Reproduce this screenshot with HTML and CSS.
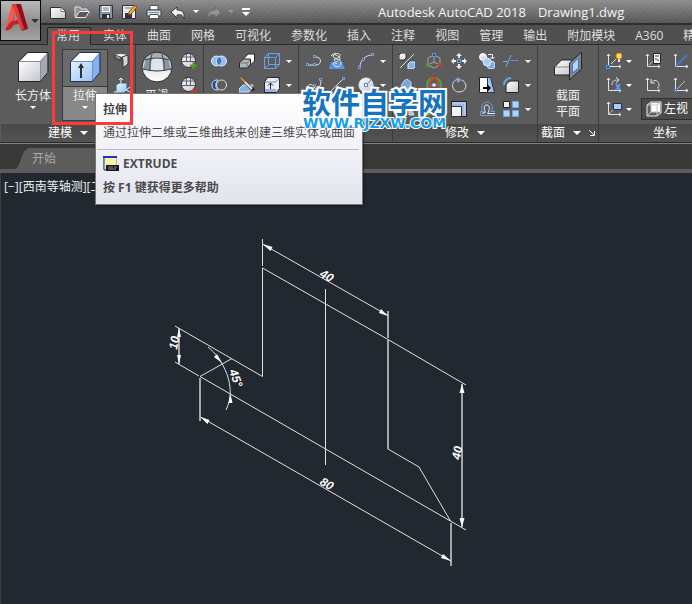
FILE: index.html
```html
<!DOCTYPE html>
<html lang="zh-CN">
<head>
<meta charset="utf-8">
<title>Autodesk AutoCAD 2018</title>
<link rel="stylesheet" href="styles.css">
</head>
<body>
<svg class="defs" aria-hidden="true">
  <defs>
    <linearGradient id="white" x1="0" y1="0" x2="1" y2="1"><stop offset="0" stop-color="#fff"/><stop offset="1" stop-color="#c3c6cf"/></linearGradient>
    <linearGradient id="blue" x1="0" y1="0" x2="1" y2="1"><stop offset="0" stop-color="#e3f1ff"/><stop offset="1" stop-color="#9cc4f3"/></linearGradient>
    <linearGradient id="ball" x1="0" y1="0" x2="0" y2="1"><stop offset="0" stop-color="#9aa1a8"/><stop offset=".6" stop-color="#e8eaee"/><stop offset="1" stop-color="#fff"/></linearGradient>
    <linearGradient id="red" x1="0" y1="0" x2="1" y2="1"><stop offset="0" stop-color="#ee4a4a"/><stop offset="1" stop-color="#a31620"/></linearGradient>
    <symbol id="globe" viewBox="0 0 32 32">
      <circle cx="16" cy="16" r="15" fill="url(#ball)" stroke="#25282b"/>
      <path d="M5 8q11-4 22 0l3 10q-14 4-28 0z" fill="#8d959c"/>
      <path d="M11 7q5-1 10 0l2 12q-7 1.200-14 0z" fill="#dfe4e9"/>
      <path d="M4 9q12-4 24 0M2 18q14 4 28 0M11 3Q8 11 9 20M21 3q3 8 2 17" fill="none" stroke="#3c4349"/>
    </symbol>
    <symbol id="miniglobe" viewBox="0 0 16 16">
      <circle cx="7.500" cy="7.500" r="7" fill="url(#white)" stroke="#2b2e31"/>
      <path d="M2 4h11M1 8.500h13M5.500 1v8M9.500 1v8" fill="none" stroke="#5a636b"/>
    </symbol>
    <symbol id="axes" viewBox="0 0 16 16">
      <path d="M2.500 1v12.500H15M1 3l1.500-2L4 3M13 12l2 1.500-2 1.500" fill="none" stroke="#e4e4e4"/>
    </symbol>
  </defs>
</svg>

<header class="top">
  <button class="logo" aria-label="应用程序菜单">
    <svg width="39" height="38" viewBox="0 0 39 38">
      <path d="M11 2h8l8 25-6 2-6-19-4 16-6 3z" fill="url(#red)"/>
      <path d="M11 2l4 7L9 27l-5 1z" fill="#f05a55"/>
      <path d="M4 28l5-8 13-4 2 4-11 3-5 5z" fill="#c12530"/>
      <path d="M15 2h5l7 25-4-1z" fill="#8f1019"/>
      <path d="M11 2l4 0 8 25-3 1z" fill="#dc3d3f"/>
      <path d="M30 17h8l-4 4z" fill="#2e333a"/>
    </svg>
  </button>
  <div class="titlebar">
    <nav class="quick" aria-label="快速访问工具栏">
      <button aria-label="新建"><svg width="16" height="16" viewBox="0 0 16 16"><path d="M.5 3.500h11l4 4v7H.5z" fill="url(#white)" stroke="#303030"/><path d="M11 3.500v4h4" fill="#fff" stroke="#777"/></svg></button>
      <button aria-label="打开"><svg width="16" height="16" viewBox="0 0 16 16"><path d="M1 13V3h5l1 2h6v3" fill="#8b949c" stroke="#dde1e4"/><path d="M1.500 13.500l4-6h10l-4 6z" fill="#525960" stroke="#e8ebee"/></svg></button>
      <button aria-label="保存"><svg width="16" height="16" viewBox="0 0 16 16"><path d="M1.500 1.500h13v13h-13z" fill="#8795a5" stroke="#2d3339"/><path d="M4 2h8v6H4z" fill="#f4f6f8"/><path d="M5 4h6M5 6h6" stroke="#777"/><path d="M4 10h8v5H4z" fill="#2b3540"/><path d="M9 11h2v3H9z" fill="#eee"/></svg></button>
      <button aria-label="另存为"><svg width="16" height="16" viewBox="0 0 16 16"><path d="M.5 1.500h13v13H.5z" fill="#e5e8ec" stroke="#2d3339"/><path d="M3 9h7v6H3z" fill="#2b3540"/><path d="M3 4h7" stroke="#777"/><path d="M6 11l1-3 6-7 2 2-6 7z" fill="#f2b53b" stroke="#7c4d12"/><path d="M13 1l2 2" stroke="#d44" stroke-width="2"/></svg></button>
      <button aria-label="打印"><svg width="16" height="16" viewBox="0 0 16 16"><path d="M4 1.500h8V6H4z" fill="#fff" stroke="#505050"/><path d="M1 6h14v6H1z" fill="#d9dde1" stroke="#393d40"/><path d="M4 10.500h8l1 4H3z" fill="#fff" stroke="#555"/><path d="M3 8.500h10" stroke="#7098bc"/></svg></button>
      <button aria-label="放弃"><svg width="16" height="16" viewBox="0 0 16 16"><path d="M1 8l6-5v3c5 0 8 2 7 9-1-4-3-5-7-4v3z" fill="#e8eef4" stroke="#33383d"/></svg></button>
      <button aria-label="放弃列表"><i class="caret"></i></button>
      <button aria-label="重做"><svg width="16" height="16" viewBox="0 0 16 16"><path d="M15 8L9 3v3C4 6 1 8 2 15c1-4 3-5 7-4v3z" fill="#929292" stroke="#6b6b6b"/></svg></button>
      <button aria-label="重做列表"><i class="caret dim"></i></button>
      <button aria-label="自定义"><svg width="10" height="10" viewBox="0 0 10 10"><path d="M1 2h8" stroke="#fff" stroke-width="2"/><path d="M1 5h8L5 9z" fill="#fff"/></svg></button>
    </nav>
    <h1 class="title"><span>Autodesk AutoCAD 2018</span><span>Drawing1.dwg</span></h1>
  </div>
  <nav class="tabs" aria-label="功能区选项卡">
    <a class="tab active" href="#home">常用</a>
    <a class="tab" href="#solid">实体</a>
    <a class="tab" href="#surface">曲面</a>
    <a class="tab" href="#mesh">网格</a>
    <a class="tab" href="#visual">可视化</a>
    <a class="tab" href="#param">参数化</a>
    <a class="tab" href="#insert">插入</a>
    <a class="tab" href="#annotate">注释</a>
    <a class="tab" href="#view">视图</a>
    <a class="tab" href="#manage">管理</a>
    <a class="tab" href="#output">输出</a>
    <a class="tab" href="#addins">附加模块</a>
    <a class="tab" href="#a360">A360</a>
    <a class="tab" href="#apps">精</a>
  </nav>
</header>

<main class="app">
<div class="ribbon">
  <section class="panel modeling">
    <div class="tools">
      <button class="big">
        <svg width="32" height="32" viewBox="0 0 32 32"><path d="M1.500 10.500l9-9H31v20l-8 9H1.500z" fill="#8c8e93" stroke="#202224"/><path d="M3 10l8-8h19l-7 8z" fill="#fff"/><path d="M2 11h21v19H2z" fill="url(#white)"/><path d="M24 11l6-8v18l-6 8z" fill="#a5a8b0"/></svg>
        <span>长方体</span><i class="caret"></i>
      </button>
      <button class="big pressed">
        <svg width="32" height="32" viewBox="0 0 32 32"><path d="M1.500 10.500l9-9H31v20l-8 9H1.500z" fill="#678fc7" stroke="#1c3557"/><path d="M3 10l8-8h19l-7 8z" fill="#fff"/><path d="M2 11h21v19H2z" fill="url(#blue)"/><path d="M24 11l6-8v18l-6 8z" fill="#84b2ee"/><path d="M12 27V14" stroke="#29313a" stroke-width="2"/><path d="M9 17l3-5 3 5z" fill="#29313a"/></svg>
        <span>拉伸</span><i class="caret"></i>
      </button>
      <div class="stack">
        <button aria-label="多段体"><svg width="16" height="16" viewBox="0 0 16 16"><path d="M1 1.500l6 2v4l-6-2z" fill="#85898e" stroke="#303236"/><path d="M1 1.500L7 1l7 1-6 2z" fill="#fff"/><path d="M8 4l6-2v9l-5 4V7z" fill="#d4d7db" stroke="#303236"/></svg></button>
        <button aria-label="按住并拖动"><svg width="16" height="16" viewBox="0 0 16 16"><path d="M2 8l3-2h8v7l-3 3H2z" fill="url(#blue)" stroke="#3d5a80"/><path d="M7 9V1M5 3l2-2 2 2M12 13l4-3M0 15h3M12 13l4 2" fill="none" stroke="#eee"/></svg></button>
      </div>
    </div>
    <h2>建模<i class="caret wide"></i></h2>
  </section>

  <section class="panel mesh">
    <div class="tools">
      <button class="big">
        <svg width="32" height="32"><use href="#globe"/></svg>
        <span>平滑</span>
      </button>
      <div class="stack">
        <button aria-label="提高平滑度"><svg width="16" height="16" viewBox="0 0 16 16"><use href="#miniglobe" width="16" height="16"/><path d="M12.500 9v7M9 12.500h7" stroke="#4ba51e" stroke-width="2"/></svg></button>
        <button aria-label="降低平滑度"><svg width="16" height="16" viewBox="0 0 16 16"><use href="#miniglobe" width="16" height="16"/><path d="M10 14h6" stroke="#e0360f" stroke-width="2"/></svg></button>
      </div>
    </div>
    <h2></h2>
  </section>

  <section class="panel solid">
    <div class="tools">
      <button aria-label="并集"><svg width="16" height="16" viewBox="0 0 16 16"><circle cx="5.500" cy="8" r="5" fill="#9fbce8" stroke="#e6effc"/><circle cx="10.500" cy="8" r="5" fill="#9fbce8" stroke="#e6effc"/><path d="M8 4c3 3 3 5 0 8-3-3-3-5 0-8z" fill="#3975cc"/></svg></button>
      <button aria-label="按住拖动"><svg width="16" height="16" viewBox="0 0 16 16"><path d="M5 5.500l4-4.500h6.500v7l-4 4H5z" fill="#fff" stroke="#26282a"/><path d="M.5 9.500l4-3.500h7v5l-3 4h-8z" fill="#b3b6b9" stroke="#26282a"/><path d="M1 10h7v5M8 10l3-3" fill="none" stroke="#777"/></svg></button>
      <button aria-label="提取边"><svg width="16" height="16" viewBox="0 0 16 16"><path d="M.5 4.500h11v11H.5zM4.500.5h11v11h-11zM.5 4.500l4-4M11.500 4.500l4-4M11.500 15.500l4-4M.5 15.500l4-4" fill="none" stroke="#6aa2e8"/></svg></button>
      <button aria-label="更多"><i class="caret"></i></button>
      <button aria-label="差集"><svg width="16" height="16" viewBox="0 0 16 16"><circle cx="10.500" cy="8" r="5" fill="none" stroke="#ddd"/><path d="M7 3C-1 2-1 14 7 13 4 10 4 6 7 3z" fill="#1d4a8e" stroke="#d7e5f9"/></svg></button>
      <button aria-label="剖切"><svg width="16" height="16" viewBox="0 0 16 16"><path d="M0 12l4-4h10l-4 7H0z" fill="#7fb1ed" stroke="#d9e9fb"/><path d="M2 1l11 11 2 1" stroke="#222" stroke-width="3"/><path d="M2 1l11 11" stroke="#f3e8d6" stroke-width="2"/><path d="M2 1l4 4" stroke="#c47b37" stroke-width="2"/></svg></button>
      <button aria-label="拉伸面"><svg width="16" height="16" viewBox="0 0 16 16"><path d="M.5 5l3-4.500h12v11l-3 4H.5z" fill="#e9edf3" stroke="#25282d"/><path d="M1 5h11l3-4" fill="none" stroke="#7b8ba0"/><path d="M1 12h11v3H1z" fill="#8fb6e8"/><path d="M6.500 12V6M4 8.500L6.500 6 9 8.500" fill="none" stroke="#222"/></svg></button>
      <button aria-label="更多"><i class="caret"></i></button>
    </div>
    <h2></h2>
  </section>

  <section class="panel draw">
    <div class="tools">
      <button aria-label="多段线"><svg width="16" height="16" viewBox="0 0 16 16"><path d="M1 12h9c6 0 6-8 0-8" fill="none" stroke="#ddd"/><path d="M.5 10.500h2v2h-2zM7.500 2.500h2v2h-2zM7.500 10.500h2v2h-2z" fill="#26466f" stroke="#78aaf0"/></svg></button>
      <button aria-label="螺旋"><svg width="16" height="16" viewBox="0 0 16 16"><path d="M2 9h11l3 7H0z" fill="#5b93e4"/><path d="M2 3c3-4 10-3 9 0s-7 3-7 0 7 0 7 3-6 3-6 1 7-1 7 3-5 5-7 2 1-3 3-1" fill="none" stroke="#eee"/></svg></button>
      <button class="end" aria-label="圆弧"><svg width="16" height="16" viewBox="0 0 16 16"><path d="M2 14C2 8 7 2 14 2" fill="none" stroke="#ddd"/><path d="M.5 13.500h2v2h-2zM4.500 5.500h2v2h-2zM13.500.5h2v2h-2z" fill="#26466f" stroke="#78aaf0"/></svg></button>
      <button aria-label="更多"><i class="caret"></i></button>
      <button aria-label="样条曲线"><svg width="16" height="16" viewBox="0 0 16 16"><path d="M1 13c1-8 5-6 7-3s7 3 7-8" fill="none" stroke="#ddd"/><path d="M7.500 7.500h2v2h-2zM13.500 1.500h2v2h-2z" fill="#26466f" stroke="#78aaf0"/></svg></button>
      <button aria-label="直线"><svg width="16" height="16" viewBox="0 0 16 16"><path d="M1 15L14 2" stroke="#ddd"/><path d="M13.500.5h2v2h-2z" fill="#26466f" stroke="#78aaf0"/></svg></button>
      <button class="end" aria-label="圆"><svg width="16" height="16" viewBox="0 0 16 16"><circle cx="8" cy="8" r="7" fill="url(#white)" stroke="#eee"/><path d="M8 8l5-5" stroke="#4b86dc"/><path d="M6.500 6.500h3v3h-3z" fill="#fff" stroke="#4b86dc"/></svg></button>
      <button aria-label="更多"><i class="caret"></i></button>
    </div>
    <h2></h2>
  </section>

  <section class="panel modify">
    <div class="tools">
      <button aria-label="三维对齐"><svg width="16" height="16" viewBox="0 0 16 16"><path d="M1 15L15 1" stroke="#ddd"/><path d="M0 2l2-2h5v5L5 7H0z" fill="#eee" stroke="#333"/><path d="M9 11l2-2h5v5l-2 2H9z" fill="#7fb1f0" stroke="#d6e7fc"/></svg></button>
      <button aria-label="三维移动"><svg width="16" height="16" viewBox="0 0 16 16"><path d="M8 2l6 3v7l-6 3-6-3V5zM8 2v7M8 9l-6 3M8 9l6 3" fill="none" stroke="#a5a5a5"/><path d="M6.500.5h3v3h-3z" fill="#1e4d90" stroke="#5c99ee"/><circle cx="2" cy="12" r="2" fill="#4ea12c"/><circle cx="14" cy="12" r="2" fill="#c83b2a"/></svg></button>
      <button aria-label="移动"><svg width="16" height="16" viewBox="0 0 16 16"><path d="M8 0l3 3H9v2H7V3H5zM8 16l3-3H9v-2H7v2H5zM0 8l3-3v2h2v2H3v2zM16 8l-3-3v2h-2v2h2v2z" fill="#eee"/><path d="M6.500 6.500h3v3h-3z" fill="#264d80" stroke="#78aaf0"/></svg></button>
      <button aria-label="复制"><svg width="16" height="16" viewBox="0 0 16 16"><circle cx="4" cy="4" r="3.500" fill="url(#white)" stroke="#fff"/><circle cx="12" cy="12" r="4" fill="#77a9ec" stroke="#d0e3fb"/><circle cx="8" cy="9" r="4" fill="#a9cbf5" stroke="#e0edfc"/><path d="M9 1.500h4.500v4M11.500 4l2 2 2-2" fill="none" stroke="#eee"/></svg></button>
      <button aria-label="修剪"><svg width="16" height="16" viewBox="0 0 16 16"><path d="M0 8.500h5M3 14L8 2" stroke="#78a8e8"/><path d="M8 7.500h8" stroke="#62a0f0" stroke-dasharray="3 1"/></svg></button>
      <button aria-label="更多"><i class="caret"></i></button>
      <button aria-label="三维镜像"><svg width="16" height="16" viewBox="0 0 16 16"><path d="M5 4l3-2 4 3v6l-6 2-4-4z" fill="#7da4d5" stroke="#b9d2f1"/></svg></button>
      <button aria-label="三维旋转"><svg width="16" height="16" viewBox="0 0 16 16"><circle cx="8" cy="8" r="7" fill="none" stroke="#4fa82f" stroke-width="2"/><path d="M1 8h14" stroke="#3b7de0" stroke-width="2"/><ellipse cx="8" cy="8" rx="4" ry="7" fill="none" stroke="#d93a26" stroke-width="2"/><path d="M6.500 6.500h3v3h-3z" fill="#eee"/></svg></button>
      <button aria-label="旋转"><svg width="16" height="16" viewBox="0 0 16 16"><path d="M8 2C-1 3 0 15 8 15s9-9 3-12" fill="none" stroke="#ddd"/><path d="M6 0l5 3-5 3z" fill="#72a8f0"/></svg></button>
      <button aria-label="拉长"><svg width="16" height="16" viewBox="0 0 16 16"><path d="M.5.500h8v15h-8z" fill="#fff" stroke="#222"/><path d="M8.500.5h3l4 15h-7z" fill="#9ec3ee" stroke="#24384e"/><path d="M4 11h5" stroke="#000" stroke-width="2"/><path d="M8 7l4 4-4 4z" fill="#000"/></svg></button>
      <button aria-label="圆角"><svg width="16" height="16" viewBox="0 0 16 16"><path d="M3 15.500V10c0-4 3-6 6-6h6.500v11.500z" fill="url(#white)" stroke="#222"/><path d="M1 8c0-4 3-7 7-7" fill="none" stroke="#67a2ee" stroke-width="2"/></svg></button>
      <button aria-label="更多"><i class="caret"></i></button>
      <button aria-label="镜像"><svg width="16" height="16" viewBox="0 0 16 16"><path d="M6 2L1 14h5zM10 2l5 12h-5z" fill="#a7c5ea" stroke="#ddd"/></svg></button>
      <button aria-label="三维缩放"><svg width="16" height="16" viewBox="0 0 16 16"><path d="M8 2v8l-6 4M8 10l6 4" fill="none" stroke="#bbb"/><path d="M0 14l4-4v5z" fill="#4ea12c"/></svg></button>
      <button aria-label="缩放"><svg width="16" height="16" viewBox="0 0 16 16"><path d="M.5.5h15v15H.5z" fill="#9bb8e1" stroke="#222"/><path d="M2 2h12v12" fill="none" stroke="#c8dbf5"/><path d="M.5 5.500h10v10H.5z" fill="#f5f6f8" stroke="#333"/></svg></button>
      <button aria-label="偏移"><svg width="16" height="16" viewBox="0 0 16 16"><path d="M16 10.500h-4c3-3 1-9.500-4-9.500S1 7.500 4 10.500H1.500v4H16" fill="none" stroke="#6ba3ee"/><path d="M16 12.500H8.500c2-3 3-8-.5-8.500s-3 4-2 6v2H3" fill="none" stroke="#eee"/></svg></button>
      <button aria-label="阵列"><svg width="16" height="16" viewBox="0 0 16 16"><path d="M.5.5h6v6h-6z" fill="#eee" stroke="#222"/><path d="M9.500.5h6v6h-6zM.5 9.500h6v6h-6zM9.500 9.500h6v6h-6z" fill="#b4d0f6" stroke="#6da5ee"/></svg></button>
      <button aria-label="更多"><i class="caret"></i></button>
    </div>
    <h2>修改<i class="caret wide"></i></h2>
  </section>

  <section class="panel section">
    <div class="tools">
      <button class="big">
        <svg width="32" height="32" viewBox="0 0 32 32"><path d="M2.500 16l7-7H20v15H2.500z" fill="url(#white)" stroke="#222"/><path d="M3 16h15l4-6" fill="none" stroke="#888"/><path d="M17.500 12L29.500 1v17L17.500 29z" fill="#7f858c" stroke="#202224"/><path d="M20.500 13l6-6v10l-6 5z" fill="#b6d4fa" stroke="#3e77c4"/></svg>
        <span>截面</span><span>平面</span>
      </button>
    </div>
    <h2>截面<i class="caret wide"></i><svg class="launcher" width="6" height="6" viewBox="0 0 6 6"><path d="M0 0l5 5M5.500 1v4.500H1" fill="none" stroke="#fff"/></svg></h2>
  </section>

  <section class="panel coords">
    <div class="tools">
      <button class="end" aria-label="UCS 原点"><svg width="16" height="16" viewBox="0 0 16 16"><use href="#axes" width="16" height="16"/><path d="M5 11l5-5" stroke="#ddd"/><path d="M.5 12.500h3v3h-3z" fill="#1e4d90" stroke="#5c99ee"/><circle cx="13" cy="3" r="3" fill="#ffd75c" stroke="#e8820c"/><path d="M12 6h2v3h-2z" fill="#eee"/></svg></button>
      <button aria-label="更多"><i class="caret"></i></button>
      <button aria-label="命名 UCS"><svg width="16" height="16" viewBox="0 0 16 16"><use href="#axes" width="16" height="16"/><path d="M4 12l5-5" stroke="#bbb"/><path d="M8.500.5h7v10h-7z" fill="#f2f2f2" stroke="#222"/><path d="M10 3h4M10 6h2M12 7h2" stroke="#345"/></svg></button>
      <button aria-label="世界 UCS"><svg width="16" height="16" viewBox="0 0 16 16"><use href="#axes" width="16" height="16"/><path d="M3 13L14 2" stroke="#3f78cf" stroke-width="2"/></svg></button>
      <button class="end" aria-label="X 轴旋转"><svg width="16" height="16" viewBox="0 0 16 16"><use href="#axes" width="16" height="16"/><path d="M6 8c0-4 2-5 6-5M10 0l3 3-3 3" fill="none" stroke="#ddd"/><path d="M10 7l4 6M14 7l-4 6" stroke="#5b9bf2" stroke-width="2"/></svg></button>
      <button aria-label="更多"><i class="caret"></i></button>
      <button aria-label="上一个 UCS"><svg width="16" height="16" viewBox="0 0 16 16"><use href="#axes" width="16" height="16"/><path d="M6 2v4h4M6 6c3-5 8-2 8 2 0 2-1 3-2 3" fill="none" stroke="#ddd"/></svg></button>
      <button aria-label="原点"><svg width="16" height="16" viewBox="0 0 16 16"><use href="#axes" width="16" height="16"/><path d="M3 13l9-9" stroke="#bbb"/><path d="M1.500 12.500h2v2h-2z" fill="#9cc4ff" stroke="#3b7de0"/></svg></button>
      <button class="end" aria-label="视图 UCS"><svg width="16" height="16" viewBox="0 0 16 16"><use href="#axes" width="16" height="16"/><path d="M3 13l5-5" stroke="#bbb"/><path d="M7.500 2.500h8v6h-8z" fill="#a9cdfb" stroke="#1e3554"/></svg></button>
      <button aria-label="更多"><i class="caret"></i></button>
      <label class="view" for="ucs"><svg width="16" height="16" viewBox="0 0 16 16"><path d="M1 4l4-3h10v11l-4 3H1z" fill="#5b6066" stroke="#eee"/><path d="M5 2h9v9H5z" fill="#fff"/><path d="M1 4h10v11M11 4l4-3M5 1v10H15M5 11l-4 4" fill="none" stroke="#c5c9cc"/></svg>
        <select id="ucs" aria-label="视图"><option>左视</option></select></label>
    </div>
    <h2>坐标</h2>
  </section>
</div>

<nav class="files"><button class="file">开始</button></nav>

<section class="canvas">
  <p class="viewlabel">[−][西南等轴测][二</p>
  <svg class="drawing" width="312" height="336" viewBox="160 234 312 336" role="img" aria-label="等轴测轮廓">
    <g class="soft">
      <path d="M388 311v27M388 340v109M462 384v143M200 378v43M451 523v43M179 328v36"/>
    </g>
    <g class="lines">
      <path d="M262.500 239v27M262.500 268v108.500M262.500 268L388 339.500 466 385M262.500 244L388 315.500M388 449l31 18 31.500 54M325.500 289v176"/>
      <path d="M175 326L262.500 376.500M175 362l24 14M200 376.500L466 530M200 376.500l32-18M200.500 417L451 561"/>
      <path d="M208 347c14 11 30 39 18 63"/>
    </g>
    <g class="heads">
      <path d="M262.500 244l10 3-2 4zM388 316l-9-3 2-4zM200.500 417l9 3-2 4zM451 561l-10-3 2-4zM462 384l2.500 9h-5zM462 527l2.500-9h-5zM179 328l2 9h-4zM179 364l2-9h-4zM222 363l-8-6 3-3zM230.500 394l2 9-4 0z"/>
    </g>
    <g class="dims">
      <text transform="translate(319 276) rotate(30)">40</text>
      <text transform="translate(319 484) rotate(30)">80</text>
      <text transform="translate(177 350) rotate(-80)">10</text>
      <text transform="translate(460 460) rotate(-80)">40</text>
      <text transform="translate(229 371) rotate(70)">45°</text>
    </g>
  </svg>
</section>
</main>

<aside class="tip" role="tooltip">
  <h3>拉伸</h3>
  <p>通过拉伸二维或三维曲线来创建三维实体或曲面</p>
  <div class="more">
    <div class="cmd"><svg width="16" height="16" viewBox="0 0 16 16"><path d="M.5.5h13v13H.5z" fill="#f7f3a6" stroke="#bbb"/><path d="M0 1h14" stroke="#1739b5" stroke-width="2"/><path d="M1 1v13h3" fill="none" stroke="#1739b5"/><path d="M3 9h13v6H3z" fill="#151515"/><path d="M5 11h5M11 11h3M5 13h8" stroke="#8b8b8b"/></svg><b>EXTRUDE</b></div>
    <b>按 F1 键获得更多帮助</b>
  </div>
</aside>
<div class="highlight"></div>
<div class="brand"><strong>软件自学网</strong><span>WWW.RJZXW.COM</span></div>
</body>
</html>
```
FILE: styles.css
```css
* { box-sizing: border-box; }
body {
  margin: 0;
  min-height: 100vh;
  display: flex;
  flex-direction: column;
  position: relative;
  overflow: hidden;
  background: #212830;
  color: #eee;
  font: 12px/16px "Open Sans", "Noto Sans CJK SC", sans-serif;
}
button, select { font: inherit; color: inherit; }
button { border: 0; padding: 0; background: none; display: flex; align-items: center; justify-content: center; }
h1, h2, h3, p { margin: 0; font-size: 12px; font-weight: 400; }
svg { display: block; flex: none; }
.defs { position: absolute; width: 0; height: 0; }

.caret { flex: none; border: 3px solid transparent; border-top-color: #fff; border-bottom: 0; }
.caret.wide { border-width: 4px; border-bottom: 0; }
.caret.dim { border-top-color: #999; }

/* Title bar and tabs */
.top {
  display: grid;
  grid-template: 25px 20px / 41px 1fr;
  background: #505050;
  border-bottom: 1px solid #2c2c2c;
  height: 45px;
}
.logo {
  grid-row: 1 / 3;
  height: 41px;
  border: 1px solid #080808;
  background: linear-gradient(#b8b8b8, #8b8b8b 60%, #a4a4a4);
}
.titlebar {
  display: flex;
  align-items: center;
  padding-left: 9px;
  background: repeating-linear-gradient(135deg, rgba(255,255,255,.03) 0 2px, transparent 2px 4px), linear-gradient(#8d8d8d, #555);
  border-bottom: 2px solid #2d2d2d;
}
.quick { display: grid; grid-template-columns: repeat(5, 24px) 16px 20px 16px 18px 12px; }
.quick button { height: 20px; }
.quick button:nth-child(-n+5) { justify-content: flex-start; }
.title { display: flex; gap: 12px; margin-left: 126px; font-size: 13px; white-space: nowrap; color: #f5f5f5; }
.tabs { display: flex; align-items: flex-end; padding-left: 6px; overflow: hidden; }
.tab { flex: none; padding: 1px 8px 1px 12px; color: #ddd; text-decoration: none; height: 18px; }
.tab.active { padding: 0 10px 0 8px; border: 1px solid #262626; border-bottom: 0; border-radius: 2px 2px 0 0; background: #5c5c5c; }

/* Ribbon */
.app { flex: 1; display: flex; flex-direction: column; }
.ribbon {
  display: grid;
  grid-template-columns: 135px 68px 95px 94px 145px 61px 1fr;
  grid-template-rows: 97px;
  padding-left: 1px;
  background: #5c5c5c;
  border-bottom: 1px solid #292929;
  overflow: hidden;
}
.panel { display: flex; flex-direction: column; min-width: 0; border-right: 1px solid #3c3c3c; }
.panel h2 {
  display: flex;
  align-items: center;
  justify-content: center;
  gap: 8px;
  height: 18px;
  background: linear-gradient(#494949, #535353);
  color: #fff;
  white-space: nowrap;
}
.tools { flex: 1; padding-top: 4px; display: grid; grid-auto-rows: 24px; align-content: start; }
.tools button.end { justify-content: flex-end; }
.big { flex-direction: column; justify-content: flex-start; height: 72px; padding-top: 2px; width: 46px; }
.tools .big svg { margin-bottom: 5px; }
.big span { white-space: nowrap; }
.big .caret { margin-top: 2px; }
.stack { display: grid; grid-auto-rows: 24px; }
.modeling .tools { display: flex; align-items: flex-start; gap: 6px; padding-left: 9px; }
.pressed { border: 1px solid #3a3a3a; padding-top: 1px; background: linear-gradient(#6b6b6b 36px, #3a3a3a 36px 37px, #888 37px); }
.mesh .tools { display: flex; align-items: flex-start; gap: 3px; }
.mesh .big { width: 42px; }
.solid .tools { grid-template-columns: 30px 26px 24px 10px; }
.draw .tools { grid-template-columns: 30px 16px 29px 18px; }
.modify .tools { grid-template-columns: 28px 26px 24px 32px 16px 17px; }
.section .tools { justify-content: center; }
.coords { border-right: 0; }
.coords .tools { grid-template-columns: 23px 14px 34px 22px; }
.coords h2 { min-width: 132px; }
.view {
  grid-column: 3 / 5;
  display: flex;
  align-items: center;
  gap: 2px;
  margin: 1px 0 1px 5px;
  padding-left: 4px;
  width: 96px;
  border: 1px solid #2f2f2f;
  background: #4a4a4a;
}
.view select { appearance: none; border: 0; padding: 0; background: none; width: 60px; color: #fff; }

/* File tabs */
.files { display: flex; height: 30px; padding: 4px 0 0 13px; background: #383838; border-top: 1px solid #808080; border-bottom: 4px solid #5c5c5c; }
.file { width: 110px; justify-content: flex-start; padding-left: 19px; color: #a8a8a8; background: #5c5c5c; clip-path: path("M0 22C9 21 7 0 17 0H110V22Z"); }

/* Drawing area */
.canvas { flex: 1; background: #212830; border-left: 1px solid #3b3f44; }
.viewlabel { padding: 6px 0 0 3px; color: #eee; }
.drawing { margin: 39px 0 0 159px; }
.lines { fill: none; stroke: #e0e2e4; }
.soft { fill: none; stroke: #a4a7aa; stroke-width: 2; }
.heads { fill: #fff; }
.dims { fill: #fff; font: italic bold 12px "Liberation Sans", sans-serif; }

/* Tooltip over the ribbon */
.tip {
  position: absolute;
  left: 95px;
  top: 93px;
  width: 268px;
  padding: 8px 3px 8px 7px;
  background: linear-gradient(#fff, #e3e3ef);
  border: 1px solid #767676;
  color: #4b4b4b;
  box-shadow: 1px 1px 2px rgba(0,0,0,.4);
}
.tip h3 { font-weight: 700; color: #444; }
.tip p { margin-top: 7px; white-space: nowrap; }
.more { display: flex; flex-direction: column; gap: 8px; margin: 8px 0 0 -6px; padding: 6px 0 0 6px; border-top: 1px solid #bcbcc2; }
.cmd { display: flex; gap: 4px; }

.highlight { position: absolute; left: 52px; top: 31px; width: 81px; height: 94px; border: 3px solid #fb3a3a; }

.brand { position: absolute; left: 302px; top: 84px; display: flex; flex-direction: column; align-items: center; white-space: nowrap; }
.brand strong { font: 700 29px/34px "Noto Sans CJK SC", sans-serif; color: #1673bd; paint-order: stroke; -webkit-text-stroke: 4px #fff; }
.brand span { font: bold 14px/10px "DejaVu Sans", sans-serif; color: #17a0e4; paint-order: stroke; -webkit-text-stroke: 2px #fff; }
```
